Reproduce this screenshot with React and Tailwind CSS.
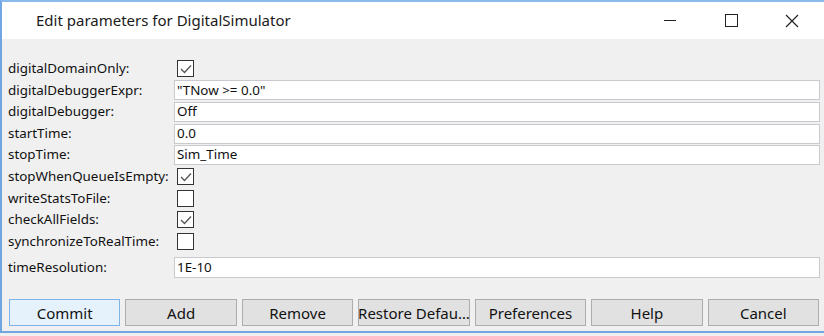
import React from "react";

const font = { fontFamily: '"Segoe UI", "Noto Sans", "Open Sans", sans-serif' };

function Check({ checked }) {
  return (
    <div className="w-[17px] h-[17px] border border-[#333] bg-white flex items-center justify-center">
      {checked && (
        <svg width="12" height="10" viewBox="0 0 12 10">
          <path d="M1 5 L4.5 8.5 L11 1.5" fill="none" stroke="#555" strokeWidth="1.3" />
        </svg>
      )}
    </div>
  );
}

const rows = [
  { label: "digitalDomainOnly:", type: "check", checked: true },
  { label: "digitalDebuggerExpr:", type: "text", value: '"TNow >= 0.0"' },
  { label: "digitalDebugger:", type: "text", value: "Off" },
  { label: "startTime:", type: "text", value: "0.0" },
  { label: "stopTime:", type: "text", value: "Sim_Time" },
  { label: "stopWhenQueueIsEmpty:", type: "check", checked: true },
  { label: "writeStatsToFile:", type: "check", checked: false },
  { label: "checkAllFields:", type: "check", checked: true },
  { label: "synchronizeToRealTime:", type: "check", checked: false },
];

const buttons = ["Commit", "Add", "Remove", "Restore Defau…", "Preferences", "Help", "Cancel"];

export default function App() {
  return (
    <div className="w-[824px] h-[336px] bg-[#f0f0f0] relative overflow-hidden" style={font}>
      <div className="flex flex-col h-[333px] border-l-2 border-t-2 border-b-2 border-l-[#6fa7e2] border-t-[#8ab9ec] border-b-[#6fa7e2] w-[824px]">
        {/* Title bar */}
        <div className="h-[37px] bg-white flex items-center shrink-0">
          <div className="pl-[34px] text-[15px] text-[#1a1a1a] flex-1">Edit parameters for DigitalSimulator</div>
          <div className="flex items-center h-full">
            <div className="w-[60px] flex justify-center">
              <div className="w-[12px] h-[1px] bg-[#222]" />
            </div>
            <div className="w-[62px] flex justify-center">
              <div className="w-[13px] h-[13px] border border-[#222]" />
            </div>
            <div className="w-[62px] flex justify-center pr-[2px]">
              <svg width="14" height="14" viewBox="0 0 14 14">
                <path d="M1 1 L13 13 M13 1 L1 13" stroke="#222" strokeWidth="1.2" />
              </svg>
            </div>
          </div>
        </div>
        {/* Body */}
        <div className="flex-1 bg-[#f0f0f0] flex flex-col pl-[6px] pr-[4px] pt-[19px]">
          <div className="flex flex-col">
            {rows.map((r, i) => (
              <div key={i} className="flex items-center h-[21.6px]">
                <div className="w-[166px] text-[13.4px] text-[#111] leading-none">{r.label}</div>
                {r.type === "check" ? (
                  <div className="pl-[3px]"><Check checked={r.checked} /></div>
                ) : (
                  <div className="flex-1 h-[20px] bg-white border border-[#c9c9cf] flex items-center px-[2px] text-[13.4px] text-[#111] leading-none">
                    {r.value}
                  </div>
                )}
              </div>
            ))}
            <div className="flex items-center h-[21px] mt-[5px]">
              <div className="w-[166px] text-[13.4px] text-[#111] leading-none">timeResolution:</div>
              <div className="flex-1 h-[21px] bg-white border border-[#c9c9cf] flex items-center px-[2px] text-[13.4px] text-[#111] leading-none">
                1E-10
              </div>
            </div>
          </div>
          <div className="grid grid-cols-7 gap-[5px] mt-[21px] pl-[1px] pr-[1px]">
            {buttons.map((b, i) => (
              <div
                key={b}
                className={
                  i === 0
                    ? "min-w-0 overflow-hidden h-[27px] border border-[#7db5ea] bg-[#e5f1fb] flex items-center justify-center text-[15px] text-[#111] whitespace-nowrap"
                    : "min-w-0 overflow-hidden h-[27px] border border-[#adadad] bg-[#e1e1e1] flex items-center justify-center text-[15px] text-[#111] whitespace-nowrap"
                }
              >
                {b}
              </div>
            ))}
          </div>
        </div>
      </div>
    </div>
  );
}
